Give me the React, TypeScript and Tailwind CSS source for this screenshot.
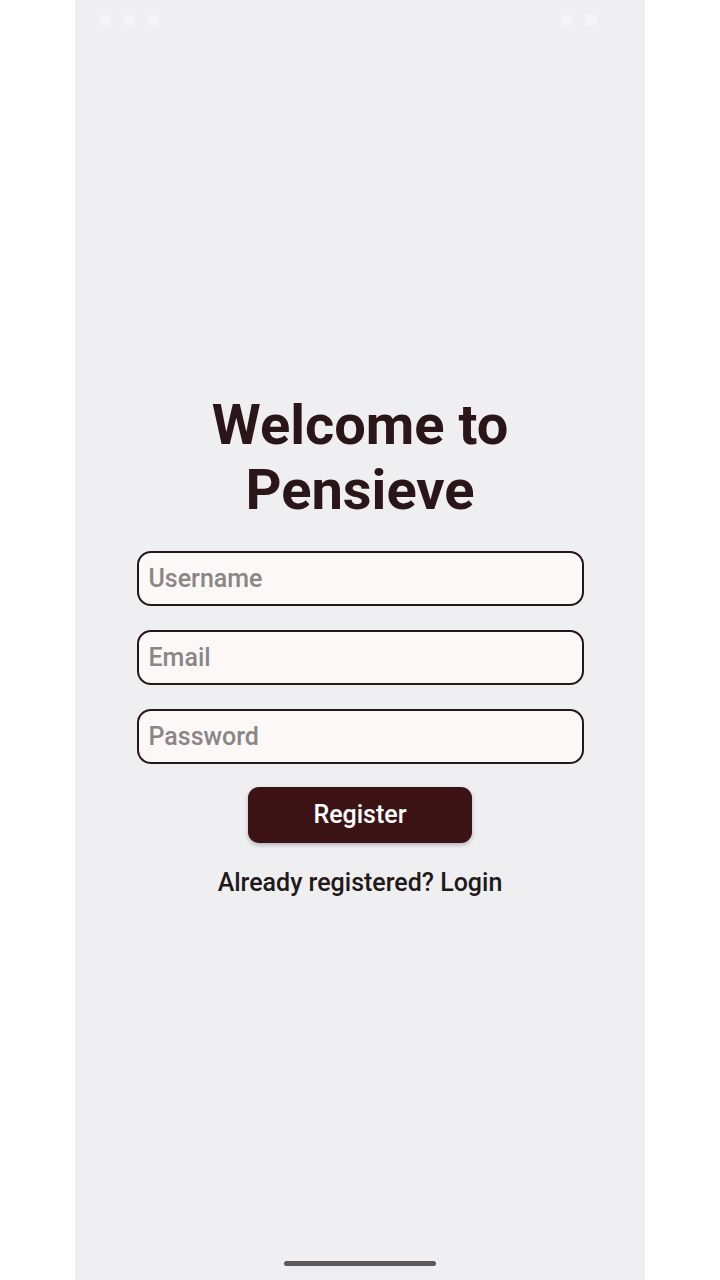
const fields = ['Username', 'Email', 'Password'];

export default function App() {
  return (
    <div className="w-full h-[1280px] bg-white flex justify-center" style={{ fontFamily: 'Roboto, "Noto Sans", sans-serif' }}>
      <div className="w-[570px] h-full bg-[#efeef0] flex flex-col items-center relative">
        {/* status bar, washed out */}
        <div className="w-full h-[40px] flex items-center justify-between px-6 opacity-40">
          <div className="flex gap-3">
            <div className="w-3 h-3 rounded-full bg-white" />
            <div className="w-3 h-3 rounded-full bg-white" />
            <div className="w-3 h-3 rounded-full bg-white" />
          </div>
          <div className="flex gap-3 pr-6">
            <div className="w-3 h-3 rounded-full bg-white" />
            <div className="w-3 h-3 rounded-sm bg-white" />
          </div>
        </div>

        <h1 className="mt-[353px] text-[56px] leading-[65px] font-bold text-[#2a1618] text-center">
          Welcome to
          <br />
          Pensieve
        </h1>

        <div className="mt-[28px] flex flex-col gap-[24px]">
          {fields.map((f) => (
            <input
              key={f}
              type={f === 'Password' ? 'password' : 'text'}
              placeholder={f}
              className="w-[447px] h-[55px] rounded-[14px] border-2 border-[#221818] bg-[#fbf8f7] px-[10px] text-[25px] font-medium text-[#2a1618] placeholder:text-[#8b8686] outline-none"
            />
          ))}
        </div>

        <button className="mt-[23px] w-[224px] h-[56px] rounded-[11px] bg-[#3c1314] text-white text-[25px] font-medium shadow-[0_2px_4px_rgba(0,0,0,0.25)]">
          Register
        </button>

        <p className="mt-[26px] text-[25px] leading-[28px] font-medium text-[#1f1a1a]">
          Already registered? Login
        </p>

        <div className="absolute bottom-[14px] left-1/2 -translate-x-1/2 w-[152px] h-[5px] rounded-full bg-[#5e5959]" />
      </div>
    </div>
  );
}
